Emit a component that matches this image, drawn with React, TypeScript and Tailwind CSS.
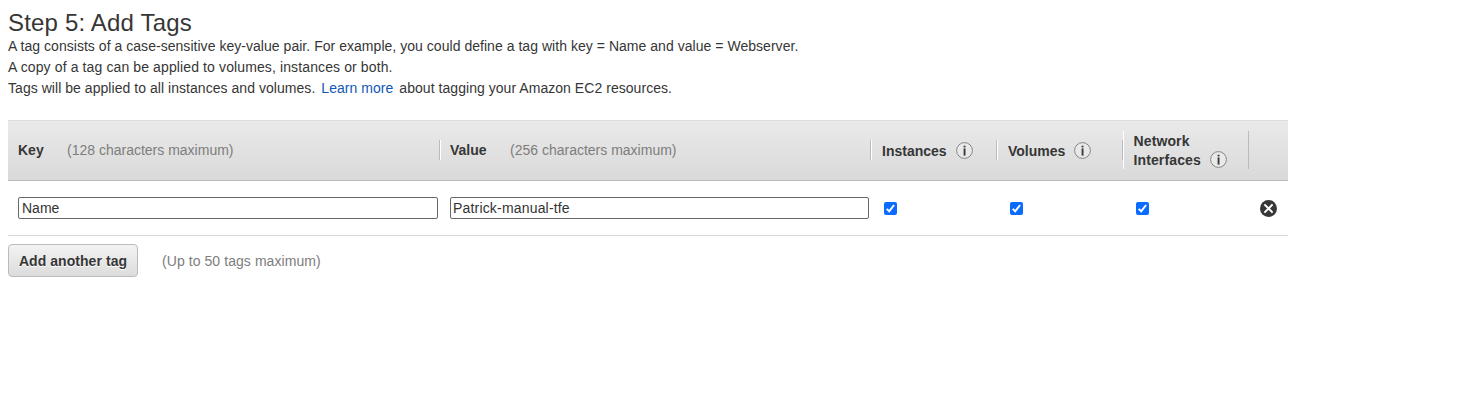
import { useState } from "react";

function InfoIcon() {
  return (
    <svg className="block size-[17px] shrink-0" viewBox="0 0 17 17">
      <circle cx="8.5" cy="8.5" r="7.9" fill="#e9e9e9" stroke="#858585" strokeWidth="1" />
      <rect x="7.6" y="3.7" width="1.9" height="1.7" fill="#3a3a3a" />
      <rect x="7.6" y="6.4" width="1.9" height="7.2" fill="#3a3a3a" />
    </svg>
  );
}

function Check({ label }: { label: string }) {
  const [on, setOn] = useState(true);
  return (
    <button
      type="button"
      role="checkbox"
      aria-label={label}
      aria-checked={on}
      onClick={() => setOn(!on)}
      className="block size-[13px] rounded-[2px] bg-[#0a6cff]"
    >
      <svg viewBox="0 0 13 13" className="block size-[13px]">
        {on && <path d="M2.7 6.9 5.2 9.3 10.1 3" fill="none" stroke="#fff" strokeWidth="2" />}
      </svg>
    </button>
  );
}

function RemoveIcon() {
  return (
    <svg className="block size-[17px]" viewBox="0 0 17 17">
      <circle cx="8.5" cy="8.5" r="8.5" fill="#383838" />
      <path d="M4.4 4.4 12.6 12.6M12.6 4.4 4.4 12.6" stroke="#fff" strokeWidth="2" />
    </svg>
  );
}

const field =
  "block h-[22px] rounded-[2px] border border-[#686868] bg-white text-[14px] leading-[20px] text-[#333] outline-none";

export default function App() {
  return (
    <main className="h-[414px] w-full overflow-hidden bg-white pl-2 pt-2 font-['Liberation_Sans',Arial,sans-serif] text-[14px] text-[#363636]">
      <h1 className="h-7 w-fit whitespace-nowrap text-[24px] leading-[30px] tracking-[0.18px]">Step 5: Add Tags</h1>
      <div className="whitespace-nowrap leading-[21px]">
        <p className="w-fit tracking-[0.037px]">A tag consists of a case-sensitive key-value pair. For example, you could define a tag with key = Name and value = Webserver.</p>
        <p className="w-fit tracking-[0.117px]">A copy of a tag can be applied to volumes, instances or both.</p>
        <p className="w-fit tracking-[0.045px]">
          Tags will be applied to all instances and volumes.
          <a href="#" className="mx-[6px] text-[#0f59b5]">Learn more</a>
          about tagging your Amazon EC2 resources.
        </p>
      </div>

      <section className="mt-[21px] w-[1280px]">
        <div className="grid h-[61px] grid-cols-[432px_431px_126px_126px_126px_39px] items-center whitespace-nowrap border-b border-t border-b-[#bbb] border-t-[#ddd] bg-linear-to-b from-[#eaeaea] to-[#d9d9d9] pb-px">
          <div className="flex h-5 items-center border-r border-[#bbb] pl-[10px]">
            <span className="w-[49px] font-bold">Key</span>
            <span className="text-[#7d7d7d]">(128 characters maximum)</span>
          </div>
          <div className="flex h-5 items-center border-l border-r border-l-white border-r-[#bbb] pl-[9px]">
            <span className="w-[60px] font-bold">Value</span>
            <span className="text-[#7d7d7d]">(256 characters maximum)</span>
          </div>
          <div className="flex h-5 items-center border-l border-r border-l-white border-r-[#bbb] pl-[10px]">
            <span className="w-[74px] pt-0.5 font-bold">Instances</span>
            <InfoIcon />
          </div>
          <div className="flex h-5 items-center border-l border-r border-l-white border-r-[#bbb] pl-[10px]">
            <span className="w-[66px] pt-0.5 font-bold">Volumes</span>
            <InfoIcon />
          </div>
          <div className="flex h-[38px] items-end border-l border-r border-l-white border-r-[#bbb] pl-[9.5px]">
            <span className="w-[76.5px] translate-y-px font-bold leading-[19px] tracking-[0.12px]">
              Network
              <br />
              Interfaces
            </span>
            <span className="pb-px"><InfoIcon /></span>
          </div>
        </div>
        <div className="grid h-[55px] grid-cols-[432px_434px_126px_126px_118px_44px] items-center border-b border-[#d8d8d8] pl-[10px]">
          <input aria-label="Key" defaultValue="Name" className={`${field} w-[420px] pl-[3px]`} />
          <input aria-label="Value" defaultValue="Patrick-manual-tfe" className={`${field} w-[419px] pl-[2px] tracking-[0.18px]`} />
          <Check label="Instances" />
          <Check label="Volumes" />
          <Check label="Network Interfaces" />
          <button type="button" aria-label="Remove tag" className="ml-[6px] w-fit">
            <RemoveIcon />
          </button>
        </div>
        <div className="mt-2 flex items-center">
          <button
            type="button"
            className="h-[33px] w-[130px] whitespace-nowrap rounded-[4px] border border-[#bbb] bg-linear-to-b from-[#f3f3f3] to-[#dcdcdc] pt-0.5 font-bold tracking-[0.06px] [text-shadow:0_1px_0_#fff]"
          >
            Add another tag
          </button>
          <span className="ml-6 pt-0.5 tracking-[0.07px] text-[#7d7d7d]">(Up to 50 tags maximum)</span>
        </div>
      </section>
    </main>
  );
}
